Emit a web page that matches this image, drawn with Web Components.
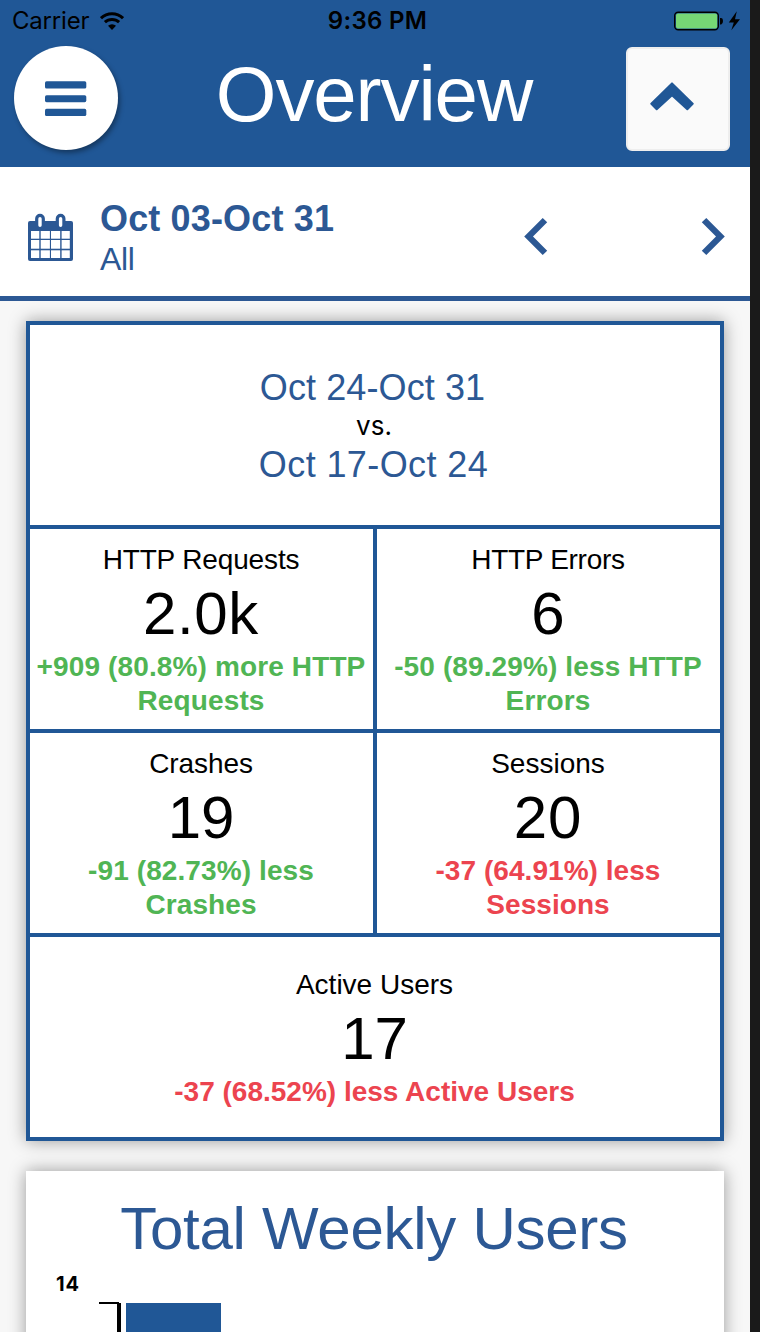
<!DOCTYPE html>
<html lang="en">
<head>
<meta charset="utf-8">
<title>Overview</title>
<style>
  html, body { margin: 0; padding: 0; }
  body { width: 760px; height: 1332px; overflow: hidden; background: #1a1a1a; font-family: "Liberation Sans", Arial, sans-serif; }
</style>
</head>
<body>
<overview-screen>
  <app-header slot="header">Overview</app-header>
  <date-filter slot="filter" range="Oct 03-Oct 31" scope="All"></date-filter>
  <summary-card>
    <period-compare slot="period" current="Oct 24-Oct 31" previous="Oct 17-Oct 24"></period-compare>
    <metric-tile label="HTTP Requests" value="2.0k" trend="good" style="--label-ls:-.15px;--value-ls:.6px;--delta-ls:.13px">+909 (80.8%) more HTTP<br>Requests</metric-tile>
    <metric-tile label="HTTP Errors" value="6" trend="good" style="--label-ls:-.3px;--delta-ls:.12px">-50 (89.29%) less HTTP<br>Errors</metric-tile>
    <metric-tile label="Crashes" value="19" trend="good" style="--label-ls:-.1px;--delta-ls:.1px">-91 (82.73%) less<br>Crashes</metric-tile>
    <metric-tile label="Sessions" value="20" trend="bad" style="--value-ls:1px;--delta-ls:.05px">-37 (64.91%) less<br>Sessions</metric-tile>
    <metric-tile wide label="Active Users" value="17" trend="bad">-37 (68.52%) less Active Users</metric-tile>
  </summary-card>
  <chart-card heading="Total Weekly Users" tick="14"></chart-card>
</overview-screen>

<script>
class BaseElement extends HTMLElement {
  connectedCallback() {
    if (this.shadowRoot) return;
    const t = document.createElement('template');
    t.innerHTML = this.render();
    this.attachShadow({ mode: 'open' }).appendChild(t.content.cloneNode(true));
  }
  a(name) { return this.getAttribute(name) || ''; }
}

customElements.define('overview-screen', class extends BaseElement {
  render() { return `
    <style>
      :host { display: flex; flex-direction: column; box-sizing: border-box; width: 750px; height: 1332px; overflow: hidden; background: #f7f7f7; }
      main { display: flex; flex-direction: column; gap: 30px; padding: 20px 26px 0; }
    </style>
    <slot name="header"></slot>
    <slot name="filter"></slot>
    <main><slot></slot></main>`; }
});

customElements.define('status-bar', class extends BaseElement {
  render() { return `
    <style>
      :host { display: grid; grid-template-columns: 1fr auto 1fr; align-items: center; height: 40px; padding: 0 10px 0 12px; color: #000; font: 24px/40px Inter, sans-serif; }
      .left, .right { display: flex; align-items: center; height: 40px; }
      .left { gap: 11px; letter-spacing: -.2px; }
      .left span, .time { padding-top: 1px; }
      .right { justify-content: flex-end; }
      .time { font-weight: 600; letter-spacing: .3px; padding-left: 3px; }
      svg { display: block; }
    </style>
    <div class="left"><span>Carrier</span>
      <svg width="24" height="18" viewBox="0 0 24 18"><g fill="none" stroke="#000" stroke-width="3">
        <path d="M1 6.2A16 16 0 0 1 23 6.2"/><path d="M4.9 10.2A10.4 10.4 0 0 1 19.1 10.2"/></g>
        <path d="M12 18L8 13.7A6 6 0 0 1 16 13.7Z"/></svg>
    </div>
    <div class="time">9:36 PM</div>
    <div class="right">
      <svg width="66" height="22" viewBox="0 0 66 22">
        <rect x=".7" y="2.2" width="43.6" height="17.6" rx="3.5" fill="none" stroke="#000" stroke-width="1.4"/>
        <rect x="2" y="3.6" width="41.2" height="14.8" rx="2" fill="#76d775"/>
        <path d="M46 8h1.2Q49 8.2 49 11T47.200 14.400H46Z"/>
        <path d="M62.800 1.300L54.800 12.600h5L57.300 20.200L66 9.300H61Z"/>
      </svg>
    </div>`; }
});

customElements.define('app-header', class extends BaseElement {
  render() { return `
    <style>
      :host { display: block; height: 167px; flex: none; background: #205796; }
      .bar { display: grid; grid-template-columns: 104px 1fr 104px; padding: 6px 20px 0 14px; }
      button { display: flex; align-items: center; justify-content: center; box-sizing: border-box; width: 104px; height: 104px; padding: 0; border: 0; }
      .menu { border-radius: 50%; background: #fff; box-shadow: 2px 3px 5px rgba(0,0,0,.36); }
      .menu svg { margin: 1px 1px 0 0; }
      .up { margin-top: 1px; border: 2px solid #eee; border-radius: 6px; background: #fafafa; justify-content: flex-start; padding: 0 0 5px 22px; }
      h1 { margin: 0; padding: 1px 0 0 4px; color: #fff; font: 78px/94px "Liberation Sans", Arial, sans-serif; letter-spacing: -1.1px; text-align: center; }
      svg { display: block; }
    </style>
    <status-bar></status-bar>
    <div class="bar">
      <button class="menu" aria-label="Menu"><svg width="42" height="35" viewBox="0 0 42 35" fill="#205796"><rect y=".3" width="41.300" height="7.200" rx="1.600"/><rect y="14.200" width="41.300" height="7" rx="1.600"/><rect y="27.800" width="41.300" height="7.200" rx="1.600"/></svg></button>
      <h1><slot></slot></h1>
      <button class="up" aria-label="Collapse"><svg width="44" height="29" viewBox="0 0 44 29"><path d="M22 1.400L42.700 21.800L37.300 27.200L22 13.300L6.700 27.200L1.300 21.800Z" fill="#205796" stroke="#205796" stroke-width="2" stroke-linejoin="round"/></svg></button>
    </div>`; }
});

customElements.define('date-filter', class extends BaseElement {
  render() {
    let cells = '';
    const xs = [[3, 8.3], [12.7, 9.200], [23, 9.200], [33.600, 8.200]], ys = [[18, 7.700], [27, 8.700], [37.300, 7.700]];
    for (const [y, h] of ys) for (const [x, w] of xs) cells += `<rect x="${x}" y="${y}" width="${w}" height="${h}"/>`;
    return `
    <style>
      :host { display: flex; flex: none; box-sizing: border-box; height: 134px; border-bottom: 5px solid #2c5894; background: #fff; color: #2c5894; padding-left: 28px; }
      .cal { margin: 46px 27px 0 0; }
      .text { width: 424px; padding-top: 30px; }
      .range { font-weight: 700; font-size: 36px; line-height: 44px; letter-spacing: .15px; }
      .scope { font-size: 32px; line-height: 38px; letter-spacing: -.3px; margin-top: -1px; }
      .nav { display: flex; justify-content: space-between; width: 201px; padding-top: 50px; }
      svg { display: block; flex: none; }
    </style>
    <svg class="cal" width="45" height="48" viewBox="0 0 45 48">
      <path d="M2 8H43Q45 8 45 10V46Q45 48 43 48H2Q0 48 0 46V10Q0 8 2 8Z" fill="#2c5894"/>
      <g fill="#fff">${cells}</g>
      <g fill="#fff" stroke="#2c5894" stroke-width="3.200"><rect x="8.700" y="2.400" width="6.600" height="13.200" rx="3.300"/><rect x="29.300" y="2.400" width="6.600" height="13.200" rx="3.300"/></g>
    </svg>
    <div class="text"><div class="range">${this.a('range')}</div><div class="scope">${this.a('scope')}</div></div>
    <div class="nav">
      <svg width="24" height="40" viewBox="0 0 24 40"><path d="M.2 19.500L18.700 1L23.200 5.200L9 19.500L23.200 33.800L18.700 38Z" fill="#2c5894"/></svg>
      <svg width="24" height="40" viewBox="0 0 24 40"><path d="M23.800 19.500L5.300 1L.8 5.200L15 19.500L.8 33.800L5.300 38Z" fill="#2c5894"/></svg>
    </div>`; }
});

customElements.define('summary-card', class extends BaseElement {
  render() { return `
    <style>
      :host { display: grid; flex: none; grid-template-columns: 343px 343px; grid-template-rows: repeat(4, 200px); gap: 4px; padding: 4px; background: #205796; box-shadow: 0 0 16px rgba(0,0,0,.38); }
      ::slotted([slot="period"]), ::slotted([wide]) { grid-column: 1 / 3; }
    </style>
    <slot name="period"></slot><slot></slot>`; }
});

customElements.define('period-compare', class extends BaseElement {
  render() { return `
    <style>
      :host { display: block; box-sizing: border-box; padding: 41px 4px 0 0; background: #fff; color: #2c5894; text-align: center; font-size: 36px; line-height: 44px; }
      .vs { color: #000; font: 26px/31px Inter, sans-serif; padding: 0 0 2px 2px; }
      .current { letter-spacing: .1px; padding-right: 1px; }
      .previous { letter-spacing: .4px; padding-left: 1px; }
    </style>
    <div class="current">${this.a('current')}</div><div class="vs">vs.</div><div class="previous">${this.a('previous')}</div>`; }
});

customElements.define('metric-tile', class extends BaseElement {
  render() { return `
    <style>
      :host { display: block; box-sizing: border-box; padding: 14px 1px 0 0; background: #fff; color: #000; text-align: center; font-size: 28px; line-height: 34px; white-space: nowrap; }
      :host([wide]) { padding-top: 31px; }
      .label { letter-spacing: var(--label-ls, 0); }
      .value { font-size: 60px; line-height: 73px; letter-spacing: var(--value-ls, 0); }
      .delta { font-weight: 700; color: #50b554; letter-spacing: var(--delta-ls, 0); }
      :host([trend="bad"]) .delta { color: #ec444f; }
    </style>
    <div class="label">${this.a('label')}</div>
    <div class="value">${this.a('value')}</div>
    <div class="delta"><slot></slot></div>`; }
});

customElements.define('chart-card', class extends BaseElement {
  render() { return `
    <style>
      :host { display: block; flex: none; box-sizing: border-box; height: 400px; padding-top: 22px; background: #fff; box-shadow: 0 0 16px rgba(0,0,0,.38); }
      h2 { margin: 0; padding-right: 2px; color: #2c5894; font: 60px/72px "Liberation Sans", Arial, sans-serif; letter-spacing: -.27px; text-align: center; }
      .plot { display: flex; align-items: flex-start; padding: 7px 0 0 30px; }
      .tick { width: 43px; font: 700 20px/24px Inter, sans-serif; letter-spacing: .9px; }
      svg { display: block; margin-top: 30px; }
    </style>
    <h2>${this.a('heading')}</h2>
    <div class="plot"><div class="tick">${this.a('tick')}</div>
      <svg width="400" height="200" viewBox="0 0 400 200" shape-rendering="crispEdges"><rect width="20" height="2"/><rect x="18" y="1" width="4" height="199"/><rect x="27" y="1" width="95" height="199" fill="#205796"/></svg>
    </div>`; }
});
</script>
</body>
</html>
